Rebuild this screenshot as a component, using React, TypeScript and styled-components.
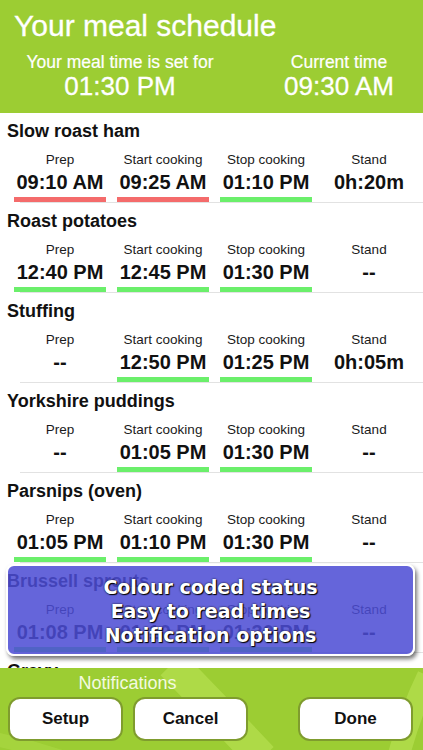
import React from "react";
import styled, { createGlobalStyle } from "styled-components";

const GlobalStyle = createGlobalStyle`
  html, body { margin: 0; padding: 0; background: #ffffff; }
  body { font-family: "Liberation Sans", Arial, sans-serif; }
  * { box-sizing: border-box; }
`;

const GREEN = "#9ccd33";

const Screen = styled.div`
  position: relative;
  width: 423px;
  height: 750px;
  display: flex;
  flex-direction: column;
  overflow: hidden;
  background: #ffffff;
`;

const Header = styled.header`
  height: 113px;
  flex: none;
  background: ${GREEN};
  color: #ffffff;
  padding-top: 8px;
`;

const Title = styled.h1`
  margin: 0;
  padding-left: 14px;
  font-size: 30px;
  line-height: 36px;
  font-weight: normal;
  -webkit-text-stroke: 0.3px #ffffff;
`;

const InfoGrid = styled.div`
  display: grid;
  grid-template-columns: 240px 1fr;
  column-gap: 15px;
  margin-top: 8px;
  text-align: center;
`;

const InfoLabel = styled.div`
  font-size: 17.5px;
  line-height: 20px;
  -webkit-text-stroke: 0.2px #ffffff;
`;

const InfoTime = styled.div`
  font-size: 26px;
  line-height: 28px;
  -webkit-text-stroke: 0.3px #ffffff;
`;

const List = styled.main`
  flex: 1;
  overflow: hidden;
  background: #ffffff;
`;

const Row = styled.section`
  padding-top: 7px;
`;

const DishName = styled.h2`
  margin: 0;
  padding-left: 7px;
  font-size: 18px;
  line-height: 22px;
  font-weight: bold;
  color: #111111;
  white-space: nowrap;
`;

const Columns = styled.div`
  display: grid;
  grid-template-columns: repeat(4, 92px);
  column-gap: 11px;
  padding-left: 14px;
  margin-top: 9px;
`;

const Cell = styled.div`
  display: flex;
  flex-direction: column;
  align-items: center;
`;

const CellLabel = styled.div`
  font-size: 13.5px;
  line-height: 18px;
  color: #1a1a1a;
  white-space: nowrap;
`;

const CellTime = styled.div`
  font-size: 20px;
  line-height: 26px;
  font-weight: bold;
  color: #111111;
  white-space: nowrap;
`;

const Bar = styled.div<{ $status?: "red" | "green" }>`
  width: 92px;
  height: 5px;
  margin-top: 2px;
  background: ${(p) =>
    p.$status === "red" ? "#f46b6b" : p.$status === "green" ? "#6bef6b" : "transparent"};
`;

const Divider = styled.div`
  margin-left: 20px;
  height: 1px;
  background: #e2e2e2;
`;

const Popup = styled.div`
  position: absolute;
  left: 6px;
  top: 564px;
  width: 409px;
  height: 92px;
  border: 2px solid #ffffff;
  border-radius: 8px;
  background: rgba(76, 76, 212, 0.86);
  box-shadow: 2px 3px 4px rgba(0, 0, 0, 0.55);
  padding-top: 9px;
  text-align: center;
  color: #ffffff;
  font-family: "DejaVu Sans", "Liberation Sans", sans-serif;
  font-weight: bold;
  font-size: 19px;
  line-height: 24px;
  text-shadow: 1px 1px 1px #000000, 0 0 2px rgba(0, 0, 0, 0.9);
`;

const Footer = styled.footer`
  position: relative;
  height: 82px;
  flex: none;
  background: ${GREEN};
  padding: 4px 10px 0 8px;
`;

const FooterArt = styled.svg`
  position: absolute;
  left: 0;
  top: 0;
  width: 423px;
  height: 82px;
`;

const FooterContent = styled.div`
  position: relative;
`;

const NotifLabel = styled.div`
  width: 239px;
  text-align: center;
  color: #f4fae0;
  font-size: 18px;
  line-height: 22px;
`;

const ButtonRow = styled.div`
  display: flex;
  gap: 10px;
  margin-top: 3px;
`;

const Button = styled.button<{ $push?: boolean }>`
  width: 115px;
  height: 44px;
  margin-left: ${(p) => (p.$push ? "auto" : "0")};
  background: #ffffff;
  border: 2px solid #7f9c2e;
  border-radius: 12px;
  font-family: "Liberation Sans", Arial, sans-serif;
  font-weight: bold;
  font-size: 17px;
  color: #111111;
  padding: 0;
`;

type Status = "red" | "green";
type Slot = { time: string; status?: Status };
type Dish = { name: string; slots: Slot[] };

const LABELS = ["Prep", "Start cooking", "Stop cooking", "Stand"];

const DISHES: Dish[] = [
  {
    name: "Slow roast ham",
    slots: [
      { time: "09:10 AM", status: "red" },
      { time: "09:25 AM", status: "red" },
      { time: "01:10 PM", status: "green" },
      { time: "0h:20m" },
    ],
  },
  {
    name: "Roast potatoes",
    slots: [
      { time: "12:40 PM", status: "green" },
      { time: "12:45 PM", status: "green" },
      { time: "01:30 PM", status: "green" },
      { time: "--" },
    ],
  },
  {
    name: "Stuffing",
    slots: [
      { time: "--" },
      { time: "12:50 PM", status: "green" },
      { time: "01:25 PM", status: "green" },
      { time: "0h:05m" },
    ],
  },
  {
    name: "Yorkshire puddings",
    slots: [
      { time: "--" },
      { time: "01:05 PM", status: "green" },
      { time: "01:30 PM", status: "green" },
      { time: "--" },
    ],
  },
  {
    name: "Parsnips (oven)",
    slots: [
      { time: "01:05 PM", status: "green" },
      { time: "01:10 PM", status: "green" },
      { time: "01:30 PM", status: "green" },
      { time: "--" },
    ],
  },
  {
    name: "Brussell sprouts",
    slots: [
      { time: "01:08 PM", status: "green" },
      { time: "01:10 PM", status: "green" },
      { time: "01:30 PM", status: "green" },
      { time: "--" },
    ],
  },
  {
    name: "Gravy",
    slots: [
      { time: "--" },
      { time: "01:20 PM", status: "green" },
      { time: "01:30 PM", status: "green" },
      { time: "--" },
    ],
  },
];

export default function App() {
  return (
    <>
      <GlobalStyle />
      <Screen>
        <Header>
          <Title>Your meal schedule</Title>
          <InfoGrid>
            <div>
              <InfoLabel>Your meal time is set for</InfoLabel>
              <InfoTime>01:30 PM</InfoTime>
            </div>
            <div>
              <InfoLabel>Current time</InfoLabel>
              <InfoTime>09:30 AM</InfoTime>
            </div>
          </InfoGrid>
        </Header>
        <List>
          {DISHES.map((dish) => (
            <Row key={dish.name}>
              <DishName>{dish.name}</DishName>
              <Columns>
                {dish.slots.map((slot, i) => (
                  <Cell key={LABELS[i]}>
                    <CellLabel>{LABELS[i]}</CellLabel>
                    <CellTime>{slot.time}</CellTime>
                    <Bar $status={slot.status} />
                  </Cell>
                ))}
              </Columns>
              <Divider />
            </Row>
          ))}
        </List>
        <Footer>
          <FooterArt viewBox="0 0 423 82" aria-hidden="true">
            <path d="M172 -4 Q 215 40 262 90" stroke="#b3dd4c" strokeWidth="32" fill="none" opacity="0.8" />
            <path d="M428 8 Q 410 45 398 90" stroke="#b3dd4c" strokeWidth="22" fill="none" opacity="0.8" />
            <path d="M-10 70 Q 30 78 70 92" stroke="#acd844" strokeWidth="14" fill="none" opacity="0.6" />
          </FooterArt>
          <FooterContent>
            <NotifLabel>Notifications</NotifLabel>
            <ButtonRow>
              <Button>Setup</Button>
              <Button>Cancel</Button>
              <Button $push>Done</Button>
            </ButtonRow>
          </FooterContent>
        </Footer>
        <Popup>
          <div>Colour coded status</div>
          <div>Easy to read times</div>
          <div>Notification options</div>
        </Popup>
      </Screen>
    </>
  );
}
